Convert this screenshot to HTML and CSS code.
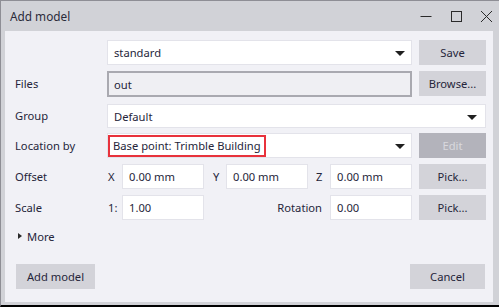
FILE: index.html
```html
<!DOCTYPE html>
<html>
<head>
<meta charset="utf-8">
<link rel="stylesheet" href="styles.css">
</head>
<body>
<div class="window">
  <div class="titlebar">
    <span class="title">Add model</span>
    <div class="controls">
      <svg width="12" height="12" viewBox="0 0 12 12"><path d="M0.5 6.5H11.5" stroke="#2a2a2a" stroke-width="1"/></svg>
      <svg width="12" height="12" viewBox="0 0 12 12"><rect x="1.5" y="1.5" width="10" height="10" fill="none" stroke="#2a2a2a" stroke-width="1"/></svg>
      <svg width="12" height="12" viewBox="0 0 12 12"><path d="M1 1L12 12M12 1L1 12" stroke="#2a2a2a" stroke-width="1"/></svg>
    </div>
  </div>
  <div class="content">
    <div class="form">
      <div class="label"></div>
      <div class="combo"><span>standard</span><i class="arrow"></i></div>
      <div class="btn">Save</div>

      <div class="label">Files</div>
      <div class="field sunken">out</div>
      <div class="btn">Browse...</div>

      <div class="label gtop">Group</div>
      <div class="combo wide gtop"><span>Default</span><i class="arrow"></i></div>

      <div class="label">Location by</div>
      <div class="combo"><span class="hl">Base point: Trimble Building</span><i class="arrow"></i></div>
      <div class="btn disabled">Edit</div>

      <div class="label">Offset</div>
      <div class="xyz">
        <span class="ax">X</span><div class="field small">0.00 mm</div>
        <span class="ax ay">Y</span><div class="field small">0.00 mm</div>
        <span class="ax az">Z</span><div class="field small">0.00 mm</div>
      </div>
      <div class="btn">Pick...</div>

      <div class="label">Scale</div>
      <div class="xyz">
        <span class="ax">1:</span><div class="field small">1.00</div>
        <span class="rot">Rotation</span><div class="field small">0.00</div>
      </div>
      <div class="btn">Pick...</div>
    </div>
    <div class="more"><i class="tri"></i>More</div>
    <div class="footer">
      <div class="btn fbtn add">Add model</div>
      <div class="btn fbtn cancel">Cancel</div>
    </div>
  </div>
</div>
</body>
</html>
```

FILE: styles.css
```css
html, body {
  margin: 0;
  padding: 0;
  width: 499px;
  height: 307px;
  overflow: hidden;
  background: #ffffff;
}
body {
  font-family: "Noto Sans", "Open Sans", sans-serif;
  font-size: 11.2px;
  color: #25253a;
}
.window {
  box-sizing: border-box;
  width: 499px;
  height: 307px;
  background: #d1d2d7;
  border-top: 1px solid #8e8e95;
  border-left: 1px solid #8e8e95;
  border-bottom: 2px solid #000;
  display: flex;
  flex-direction: column;
}
.titlebar {
  height: 30px;
  display: flex;
  align-items: center;
  justify-content: space-between;
  flex: none;
}
.title {
  margin-left: 9px;
  font-size: 11.8px;
  color: #2b2b3a;
  margin-top: -1px;
}
.controls {
  display: flex;
  gap: 18px;
  margin-right: 7px;
  margin-top: 0px;
}
.content {
  flex: 1;
  margin: 0 6px 3px 4px;
  background: #f1f1f6;
  padding: 9px 6px 0 10px;
  position: relative;
}
.form {
  display: grid;
  grid-template-columns: 85px 305px 67px;
  column-gap: 7px;
  row-gap: 6px;
  grid-auto-rows: 25px;
}
.label {
  display: flex;
  align-items: center;
}
.gtop { margin-top: 2px; }
.combo {
  position: relative;
  box-sizing: border-box;
  background: #fff;
  border: 1px solid #e3e3ea;
  display: flex;
  align-items: center;
  padding-left: 6px;
  height: 25px;
}
.combo.wide { grid-column: 2 / 4; height: 24px; }
.arrow {
  position: absolute;
  right: 6px;
  top: 10px;
  width: 0;
  height: 0;
  border-left: 5px solid transparent;
  border-right: 5px solid transparent;
  border-top: 5px solid #202020;
}
.combo.wide .arrow { right: 8px; }
.hl {
  margin-left: -6px;
  box-sizing: border-box;
  height: 22px;
  border: 2px solid #e8323c;
  padding: 0 3px 0 3px;
  display: flex;
  align-items: center;
}
.field {
  box-sizing: border-box;
  background: #fff;
  border: 1px solid #e3e3ea;
  display: flex;
  align-items: center;
  padding-left: 6px;
  height: 25px;
}
.field.sunken {
  background: #efeff3;
  border: 2px solid #a9a9b0;
  padding-left: 5px;
  height: 26px;
}
.field.small { width: 82px; }
.btn {
  box-sizing: border-box;
  background: #d3d3d9;
  display: flex;
  align-items: center;
  justify-content: center;
  height: 25px;
}
.btn.disabled {
  background: #b3b3bb;
  color: #d9d9de;
}
.xyz {
  display: flex;
  align-items: center;
}
.ax {
  width: 15px;
  padding-left: 1px;
  box-sizing: border-box;
}
.ay { margin-left: 8px; width: 14px; }
.az { margin-left: 7px; }
.rot {
  flex: 1;
  text-align: right;
  padding-right: 8px;
}
.more {
  margin-top: 9px;
  margin-left: 3px;
  display: flex;
  align-items: center;
  height: 14px;
}
.tri {
  width: 0;
  height: 0;
  border-top: 3.5px solid transparent;
  border-bottom: 3.5px solid transparent;
  border-left: 4px solid #2a2a2a;
  margin-right: 5px;
}
.footer {
  display: flex;
  justify-content: space-between;
  margin-top: 21px;
  margin-left: 1px;
  margin-right: 2px;
}
.fbtn { width: 79px; }
.cancel { width: 75px; }
```
